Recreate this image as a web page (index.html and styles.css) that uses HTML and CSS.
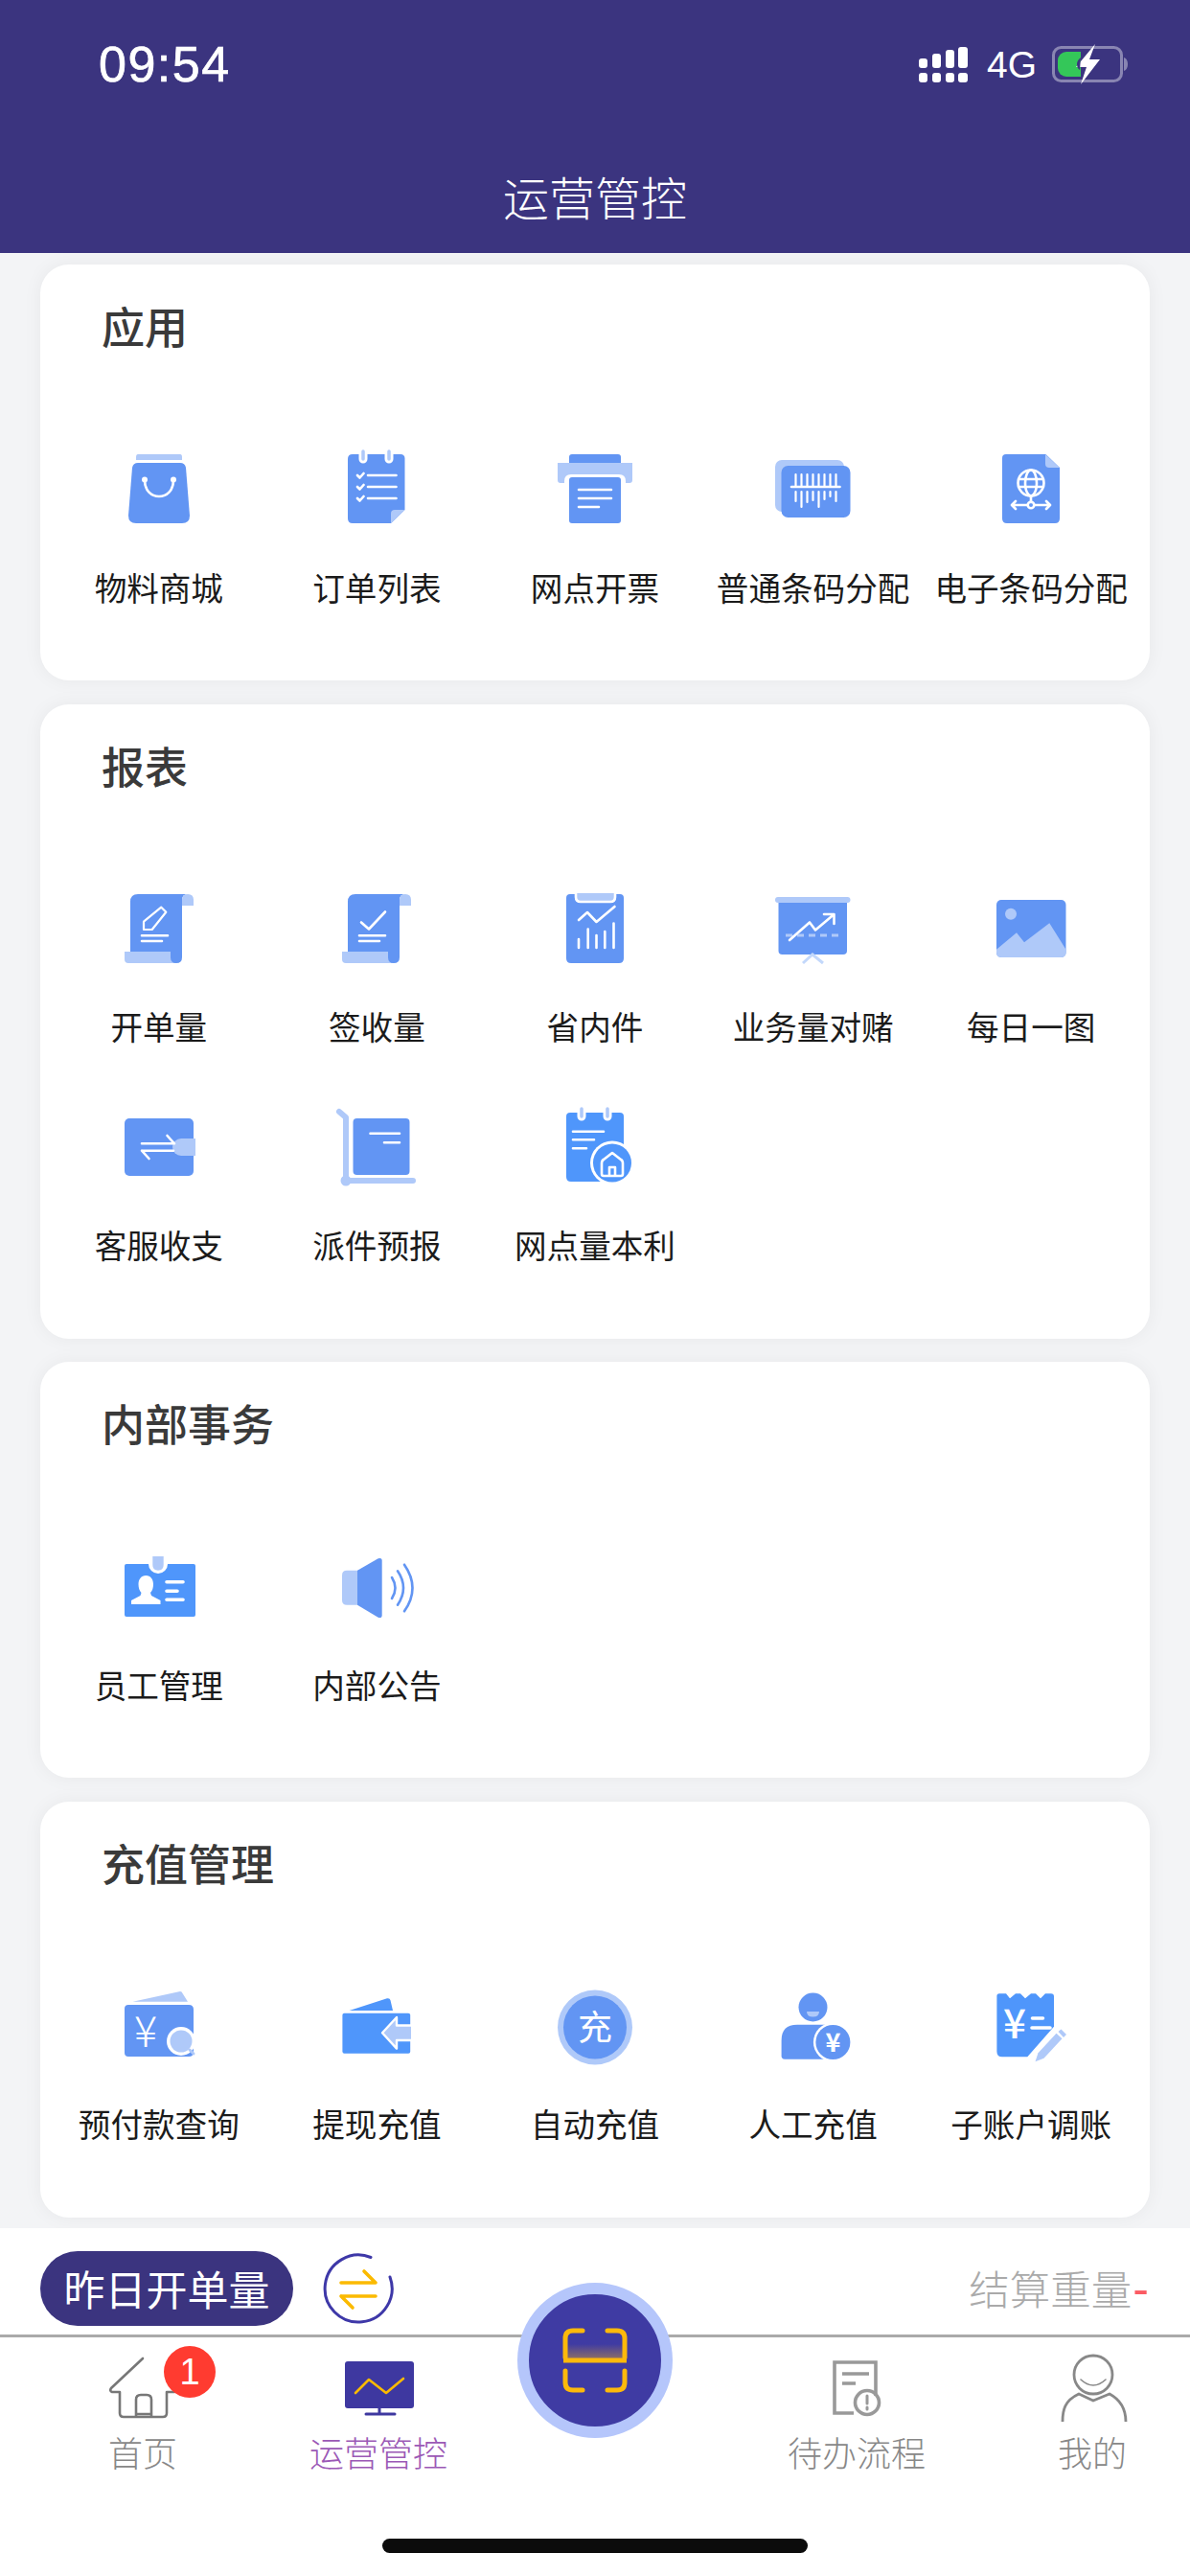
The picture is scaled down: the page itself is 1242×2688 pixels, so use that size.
FILE: index.html
```html
<!DOCTYPE html>
<html lang="zh-CN">
<head>
<meta charset="utf-8">
<title>运营管控</title>
<link rel="stylesheet" href="styles.css">
</head>
<body>
<div class="app">
  <header class="head">
    <div class="status">
      <span class="time">09:54</span>
      <div class="status-right">
        <svg class="signal" viewBox="0 0 51 37"><rect class="w" x="0" y="12" width="9" height="10" rx="3"/><rect class="w" x="0" y="27" width="9" height="10" rx="3"/><rect class="w" x="14" y="7" width="9" height="15" rx="3"/><rect class="w" x="14" y="27" width="9" height="10" rx="3"/><rect class="w" x="28" y="3" width="9" height="19" rx="3"/><rect class="w" x="28" y="27" width="9" height="10" rx="3"/><rect class="w" x="41" y="0" width="10" height="22" rx="3"/><rect class="w" x="41" y="27" width="10" height="10" rx="3"/></svg>
        <span class="net">4G</span>
        <svg class="battery" viewBox="0 0 80 42"><rect class="bat-frame" x="1.5" y="3.5" width="71" height="35" rx="8"/><path class="bat-nub" d="M75 14c3 1 4 4 4 7s-1 6-4 7z"/><path class="green" d="M6 17a9 9 0 0 1 9-9h15v26H15a9 9 0 0 1-9-9z"/><path class="w" d="M45 0 25 24h11l-6 18 20-26H39z"/><path class="notch" d="M30 14c-3 2-4 5-4 7s1 5 3 6z"/></svg>
      </div>
    </div>
    <h1 class="title">运营管控</h1>
  </header>

  <main class="main">
    <section class="card">
      <h2 class="card-title">应用</h2>
      <div class="grid">
        <div class="item">
          <svg class="ico" viewBox="0 0 100 100"><path class="l" d="M28 15h44q2 0 2 3v3H26v-3q0-3 2-3z"/><path class="d" d="M28 24h44q5 0 6 5l4 50q0 8-8 8H26q-8 0-8-8l4-50q1-5 6-5z"/><path class="s" d="M35 42c0 11 7 17 15 17s15-6 15-17"/><circle class="w" cx="35" cy="41.500" r="3"/><circle class="w" cx="65" cy="41.500" r="3"/></svg>
          <span class="label">物料商城</span>
        </div>
        <div class="item">
          <svg class="ico" viewBox="0 0 100 100"><path class="d" d="M25 15h50q4.500 0 4.500 4.500V73L65 87H25q-5 0-5-5V20q0-5 5-5z"/><path class="l" d="M65 87V77q0-4 4-4h10.500z"/><path class="ring" d="M36 13v7M63 13v7"/><path class="ring-in" d="M36 12v8M63 12v8"/><path class="s" d="M41 37h29.500M41 49h29.500M41 61h29.500"/><path class="s" d="M30 37l2.500 2.500 4-4.500M30 49l2.500 2.500 4-4.500M30 61l2.500 2.500 4-4.500"/></svg>
          <span class="label">订单列表</span>
        </div>
        <div class="item">
          <svg class="ico" viewBox="0 0 100 100"><path class="d" d="M26 15h48q3 0 3 3v10H23V18q0-3 3-3z"/><path class="l" d="M11 24h78v18q0 3-3 3h-4v-2q0-7-7-7H25q-7 0-7 7v2h-4q-3 0-3-3z"/><rect class="d" x="23" y="39" width="54" height="48" rx="3"/><path class="s" d="M33 52h34M33 61h34M33 70h21"/></svg>
          <span class="label">网点开票</span>
        </div>
        <div class="item">
          <svg class="ico" viewBox="0 0 100 100"><rect class="l" x="10" y="21" width="72" height="54" rx="7"/><rect class="d" x="16.500" y="27" width="72" height="54" rx="7"/><path class="bars" d="M31.500 36v12M37.500 36v12M43.500 36v12M49.500 36v12M55.500 36v12M61.500 36v12M67.500 36v12M73.500 36v12M31.500 54v10M37.500 54v16M43.500 54v11M49.500 54v9M55.500 54v16M61.500 54v8M67.500 54v5M73.500 54v10"/><path class="s" d="M27 49h50.500"/></svg>
          <span class="label">普通条码分配</span>
        </div>
        <div class="item">
          <svg class="ico" viewBox="0 0 100 100"><path class="d" d="M24 15h41.500L80 29v53q0 5-5 5H25q-5 0-5-5V19q0-4 4-4z"/><path class="l" d="M65 15l15 14H69q-4 0-4-4z"/><circle class="s" cx="50" cy="45" r="13.500"/><ellipse class="s" cx="50" cy="45" rx="6" ry="13.500"/><path class="s" d="M37 41h26M37 49h26M50 59v6M33 68h13.500M53.500 68H67M34 64l-4 4 4 4M66 64l4 4-4 4"/><circle class="s" cx="50" cy="68" r="3.300"/></svg>
          <span class="label">电子条码分配</span>
        </div>
      </div>
    </section>

    <section class="card">
      <h2 class="card-title">报表</h2>
      <div class="grid">
        <div class="item">
          <svg class="ico" viewBox="0 0 100 100"><path class="d" d="M28 15h52q-6 0-6 6v60q0 6-6 6H20V23q0-8 8-8z"/><path class="l" d="M74 27V21q0-6 6-6t6 6v6z"/><path class="l" d="M14 75h48v6q0 6 6 6H18q-4 0-4-4z"/><path class="s thin" d="M34 43.700 52.300 28.700l5 5L42.700 52H34z"/><path class="s" d="M32 58.300h27M32 64h21"/></svg>
          <span class="label">开单量</span>
        </div>
        <div class="item">
          <svg class="ico" viewBox="0 0 100 100"><path class="d" d="M28 15h52q-6 0-6 6v60q0 6-6 6H20V23q0-8 8-8z"/><path class="l" d="M74 27V21q0-6 6-6t6 6v6z"/><path class="l" d="M14 75h48v6q0 6 6 6H18q-4 0-4-4z"/><path class="s" d="M34 44.500l8 7 17-18M32 58.300h27M32 64h21"/></svg>
          <span class="label">签收量</span>
        </div>
        <div class="item">
          <svg class="ico" viewBox="0 0 100 100"><path class="d" d="M24 15h52q4 0 4 4v63q0 5-5 5H25q-5 0-5-5V19q0-4 4-4z"/><path class="clip" d="M30 14v4q0 5 5 5h31q5 0 5-5v-4"/><path class="s" d="M33 42l9-8 9.500 10 19-16M33 71V62M42.700 71V51.500M51.500 71V58M60.300 71V54M69.500 71V45.500"/></svg>
          <span class="label">省内件</span>
        </div>
        <div class="item">
          <svg class="ico" viewBox="0 0 100 100"><rect class="l" x="10" y="18" width="78.500" height="6" rx="3"/><path class="d" d="M13.500 24h71.500v50q0 4-4 4H17.500q-4 0-4-4z"/><path class="tick" d="M39 87l10-9 11 9"/><path class="dash" d="M21 58h55"/><path class="s" d="M25 63l21-18.500 6 8 19-16M61 36h10.500v10"/></svg>
          <span class="label">业务量对赌</span>
        </div>
        <div class="item">
          <svg class="ico" viewBox="0 0 100 100"><rect class="d" x="14" y="21" width="72.500" height="60" rx="5"/><circle class="l" cx="29" cy="35.700" r="6"/><path class="l" d="M14 72.700l21-17.500 8 10 26.300-20 17.200 27.500V76q0 5-5 5H19q-5 0-5-5z"/></svg>
          <span class="label">每日一图</span>
        </div>
        <div class="item">
          <svg class="ico" viewBox="0 0 100 100"><rect class="d" x="14" y="21" width="72" height="60" rx="5"/><path class="l" d="M73 42h15v18H73a9 9 0 0 1 0-18z"/><path class="s" d="M32 47.300h34l-7.500-8.300M32 54.700h33M32 54.700l7.500 8.300"/></svg>
          <span class="label">客服收支</span>
        </div>
        <div class="item">
          <svg class="ico" viewBox="0 0 100 100"><path class="frame" d="M11 14l7 6v66h70"/><circle class="l" cx="18" cy="86" r="5.500"/><rect class="d" x="25.500" y="21" width="59" height="59" rx="4"/><path class="s" d="M43.500 36.700H74M58 46.300H74"/></svg>
          <span class="label">派件预报</span>
        </div>
        <div class="item">
          <svg class="ico" viewBox="0 0 100 100"><path class="b" d="M24 15h52q4 0 4 4v63q0 5-5 5H25q-5 0-5-5V19q0-4 4-4z"/><path class="ring" d="M36 12v7M63 12v7"/><path class="ring-in" d="M36 11v8M63 11v8"/><path class="s" d="M27 34.700h32M27 43.300h22M27 52.300h14"/><circle class="w" cx="68" cy="67.500" r="23"/><circle class="b" cx="68" cy="67.500" r="20"/><path class="s" d="M57 68v11q0 2 2 2h18q2 0 2-2V68q0-3-2-4l-9-7-9 7q-2 1-2 4zM65 81v-9h6v9"/></svg>
          <span class="label">网点量本利</span>
        </div>
      </div>
    </section>

    <section class="card">
      <h2 class="card-title">内部事务</h2>
      <div class="grid">
        <div class="item">
          <svg class="ico" viewBox="0 0 100 100"><path class="b" d="M16 28h70q2 0 2 2v51q0 2-2 2H16q-2 0-2-2V30q0-2 2-2z" /><circle class="w" cx="49" cy="28" r="10"/><path class="l" d="M43.300 20h11.400v9q0 5.700-5.700 5.700t-5.700-5.700z"/><path class="w" d="M36.300 40c5 0 7.700 4 7.700 9 0 4-1 7-3 9l1 3 9.500 5v4H21v-4l9.500-5 1-3c-2-2-3-5-3-9 0-5 2.800-9 7.800-9z"/><path class="s thick" d="M58 46.700h17M58 56.300h11M58 65.300h17"/></svg>
          <span class="label">员工管理</span>
        </div>
        <div class="item">
          <svg class="ico" viewBox="0 0 100 100"><path class="l" d="M19 34.700h11v36H19q-5 0-5-5V39.700q0-5 5-5z"/><path class="d" d="M30 34.700 51.700 22.300q4-1.500 4 2.400v56.600q0 3.900-4 2.400L30 70.700z"/><path class="arc" d="M66 42q7 11 0 22M72 35.300q12 17.700 0 35.400M79 28.700q17 24.300 0 48.600"/></svg>
          <span class="label">内部公告</span>
        </div>
      </div>
    </section>

    <section class="card">
      <h2 class="card-title">充值管理</h2>
      <div class="grid">
        <div class="item">
          <svg class="ico" viewBox="0 0 100 100"><path class="l" d="M22.500 25.700 72 15q2 0 2.500 2L80 25.700z"/><path class="d" d="M18 29h63q5 0 5 5v44q0 5-5 5H18q-4 0-4-4V33q0-4 4-4z"/><text class="yen" x="36" y="73">¥</text><circle class="w" cx="73" cy="67" r="15"/><circle class="l" cx="73" cy="67" r="11.500"/><path class="handle" d="M82 76l4 4"/></svg>
          <span class="label">预付款查询</span>
        </div>
        <div class="item">
          <svg class="ico" viewBox="0 0 100 100"><path class="b" d="M21.600 35 61 22.300q3-.5 3.500 2L67 35z"/><rect class="b" x="14.400" y="37.700" width="70.800" height="42" rx="2"/><path class="arrow" d="M86 50.500h-15V42L56 58.300l15 16.300v-8.600h15"/></svg>
          <span class="label">提现充值</span>
        </div>
        <div class="item">
          <svg class="ico" viewBox="0 0 100 100"><circle class="l" cx="50" cy="52.500" r="39"/><circle class="d" cx="50" cy="52.500" r="33"/><text class="chong" x="50" y="66">充</text></svg>
          <span class="label">自动充值</span>
        </div>
        <div class="item">
          <svg class="ico" viewBox="0 0 100 100"><circle class="d" cx="49.500" cy="31.500" r="15"/><path class="l" d="M43 36h13q0 5.500-6.500 5.500T43 36z"/><path class="d" d="M33 49.700h32V85.700H20q-3.400 0-3.400-3.400V66q0-16.300 16.400-16.300z"/><circle class="w" cx="70.400" cy="68" r="20.500"/><circle class="d" cx="70.400" cy="68" r="18"/><text class="yen small" x="70.400" y="78">¥</text></svg>
          <span class="label">人工充值</span>
        </div>
        <div class="item">
          <svg class="ico" viewBox="0 0 100 100"><path class="b" d="M17 17.300h7l4 5 6-5h5l5 5 6-5h5l5 5 5-5h6q3 0 3 3v31.400L46.300 83.300H20q-5.600 0-5.600-5.600V20q0-2.700 2.600-2.700z"/><text class="yen mid" x="33" y="64">¥</text><path class="s thick" d="M51.500 43h11M51 53h19"/><path class="l" d="M54.500 88.300l3-9 19-20.500 6 5.500-19 20.500z"/><path class="l" d="M78.500 57l3-2.500 5.500 5.500-3 3z"/></svg>
          <span class="label">子账户调账</span>
        </div>
      </div>
    </section>
  </main>

  <div class="bar">
    <span class="pill">昨日开单量</span>
    <svg class="swap" viewBox="0 0 76 76"><path class="swap-ring" d="M51 5.500A35 35 0 1 0 71 26"/><path class="swap-arrow" d="M20 32h36l-12-12M20 46h36M20 46l12 12"/></svg>
    <span class="settle">结算重量<span class="dash-red">-</span></span>
  </div>

  <nav class="nav">
    <div class="tab">
      <svg class="tab-ico" viewBox="0 0 120 82"><path class="home" d="M60 16 27 47q-2 3 1 4h8v22q0 4 4 4h41q4 0 4-4V51h8M53 77V59q0-5 5-5h6q5 0 5 5v18M53 74h16"/></svg>
      <span class="tab-label">首页</span>
      <span class="badge">1</span>
    </div>
    <div class="tab">
      <svg class="tab-ico" viewBox="0 0 120 82"><rect class="mon" x="25" y="19" width="72" height="49" rx="3"/><path class="mon-base" d="M61 68v6M47 74h30"/><path class="mon-line" d="M36 52l14-14 18 14 18-15"/></svg>
      <span class="tab-label active">运营管控</span>
    </div>
    <div class="tab-gap"></div>
    <div class="tab">
      <svg class="tab-ico" viewBox="0 0 120 82"><path class="task" d="M57 73H37V20h43v35"/><path class="task-line" d="M45 32h28M45 42h14"/><circle class="task-c" cx="71" cy="62" r="12.500"/><path class="task-bang" d="M71 55v8M71 67v2"/></svg>
      <span class="tab-label">待办流程</span>
    </div>
    <div class="tab">
      <svg class="tab-ico" viewBox="0 0 120 82"><ellipse class="me" cx="61" cy="33" rx="20" ry="20"/><path class="me thin-me" d="M48 38q13 12 26 0"/><path class="me" d="M29 82c0-12 2-22 17-29l15 7 17-7c13 7 17 17 17 29"/></svg>
      <span class="tab-label">我的</span>
    </div>
  </nav>

  <div class="scan">
    <svg class="scan-ico" viewBox="0 0 66 66"><defs><linearGradient id="beam" x1="0" y1="0" x2="0" y2="1"><stop offset="0" stop-color="#fdb90b" stop-opacity="0"/><stop offset="1" stop-color="#fdb90b" stop-opacity=".4"/></linearGradient></defs><rect x="2" y="16" width="62" height="15" fill="url(#beam)"/><path class="scan-line" d="M20 2H10q-8 0-8 8v20M46 2h10q8 0 8 8v20M20 64H10q-8 0-8-8V44M46 64h10q8 0 8-8V44"/><path class="scan-mid" d="M0 33h66"/></svg>
  </div>
  <div class="home-bar"></div>
</div>
</body>
</html>
```

FILE: styles.css
```css
* { box-sizing: border-box; }
html, body { margin: 0; padding: 0; }
body { font-family: "Noto Sans CJK SC", "Noto Sans", sans-serif; background: #fff; }

.app { position: relative; width: 1242px; height: 2688px; overflow: hidden; display: flex; flex-direction: column; background: #fff; }

.head { height: 264px; flex: none; background: #3b347f; color: #fff; }
.status { height: 134px; padding: 49px 64px 0 103px; display: flex; justify-content: space-between; align-items: flex-start; }
.time { font-family: "Liberation Sans", sans-serif; font-size: 52px; line-height: 37px; font-weight: 400; letter-spacing: 1.5px; -webkit-text-stroke: 0.7px #fff; }
.status-right { display: flex; align-items: flex-start; height: 37px; }
.signal { width: 51px; height: 37px; }
.net { font-family: "Liberation Sans", sans-serif; font-size: 39px; line-height: 37px; margin-left: 20px; width: 68px; }
.battery { width: 80px; height: 42px; margin-top: -3px; }
.title { margin: 0; height: 130px; padding-top: 13px; font-size: 48px; line-height: 114px; font-weight: 300; text-align: center; }

.main { flex: 1; min-height: 0; background: #f3f4f6; padding: 12px 42px 0; display: flex; flex-direction: column; gap: 24.5px; }
.card { background: #fff; border-radius: 30px; padding: 34px 10px 23px; box-shadow: 0 0 20px rgba(0, 0, 0, 0.05); }
.card-title { margin: 0; padding-left: 54px; font-size: 45px; line-height: 60px; font-weight: 500; color: #3a3a3a; }
.grid { display: grid; grid-template-columns: repeat(5, 1fr); margin-top: 89px; }
.item { display: flex; flex-direction: column; align-items: center; height: 228px; }
.ico { width: 100px; height: 100px; flex: none; }
.label { margin-top: 29.5px; font-size: 33.6px; line-height: 48px; color: #1b1b1b; white-space: nowrap; font-weight: 400; }

/* icon paint */
.d { fill: #6295f3; }
.l { fill: #afc9f9; }
.b { fill: #4f96fb; }
.w { fill: #fff; }
.s { fill: none; stroke: #fff; stroke-width: 2.6; stroke-linecap: round; stroke-linejoin: round; }
.s.thin { stroke-width: 2.2; }
.s.thick { stroke-width: 3.6; }
.ring { fill: none; stroke: #fff; stroke-width: 9; stroke-linecap: round; }
.ring-in { fill: none; stroke: #afc9f9; stroke-width: 3.5; stroke-linecap: round; }
.bars { fill: none; stroke: #fff; stroke-width: 2.2; stroke-linecap: round; }
.clip { fill: #afc9f9; stroke: #fff; stroke-width: 2.6; }
.tick { fill: none; stroke: #c3d8fb; stroke-width: 3; }
.dash { fill: none; stroke: #afc9f9; stroke-width: 3; stroke-dasharray: 7 5; }
.frame { fill: none; stroke: #afc9f9; stroke-width: 6; stroke-linecap: round; stroke-linejoin: round; }
.arc { fill: none; stroke: #6295f3; stroke-width: 2.6; stroke-linecap: round; }
.handle { fill: none; stroke: #afc9f9; stroke-width: 3; stroke-linecap: round; }
.arrow { fill: #afc9f9; stroke: #fff; stroke-width: 2.4; stroke-linejoin: round; }
.yen { font-family: "Noto Sans CJK SC", sans-serif; font-size: 45px; font-weight: 300; fill: #fff; text-anchor: middle; }
.yen.small { font-size: 27px; font-weight: 700; }
.yen.mid { font-size: 42px; font-weight: 500; }
.chong { font-family: "Noto Sans CJK SC", sans-serif; font-size: 36px; fill: #fff; text-anchor: middle; }

.bat-frame { fill: none; stroke: rgba(255, 255, 255, 0.4); stroke-width: 3; }
.bat-nub { fill: rgba(255, 255, 255, 0.4); }
.green { fill: #34c759; }
.notch { fill: #3b347f; }

.bar { height: 111px; flex: none; background: #fff; padding: 24px 43px 0 42px; display: flex; align-items: flex-start; }
.pill { width: 264px; height: 78px; border-radius: 39px; background: #3b347f; color: #fff; font-size: 43px; line-height: 76px; text-align: center; font-weight: 400; }
.swap { width: 76px; height: 76px; margin: 1px 0 0 30px; }
.swap-ring { fill: none; stroke: #3e38a8; stroke-width: 3; stroke-linecap: round; }
.swap-arrow { fill: none; stroke: #fbba00; stroke-width: 3.6; stroke-linecap: round; stroke-linejoin: round; }
.settle { margin-left: auto; font-size: 42.5px; line-height: 76px; color: #aaa; font-weight: 300; }
.dash-red { margin-left: 1px; color: #fb5b63; font-family: "Liberation Sans", sans-serif; font-size: 50px; }

.nav { height: 252px; flex: none; border-top: 3px solid #aaa; display: grid; grid-template-columns: 298px 194px 258px 288px 204px; background: #fff; }
.tab { position: relative; display: flex; flex-direction: column; align-items: center; padding-top: 6px; }
.tab-ico { width: 120px; height: 82px; flex: none; }
.tab-label { margin-top: 6px; font-size: 36px; line-height: 50px; color: #888; font-weight: 300; white-space: nowrap; }
.tab-label.active { color: #9b59b6; }
.badge { position: absolute; left: 171px; top: 9px; width: 54px; height: 54px; border-radius: 50%; background: #ff3b30; color: #fff; font-family: "Liberation Sans", sans-serif; font-size: 38px; line-height: 54px; text-align: center; }

.home { fill: none; stroke: #777; stroke-width: 2.6; stroke-linecap: round; stroke-linejoin: round; }
.mon { fill: #3e38a0; }
.mon-base { fill: none; stroke: #3e38a0; stroke-width: 3; stroke-linecap: round; }
.mon-line { fill: none; stroke: #fbba00; stroke-width: 2.6; stroke-linecap: round; stroke-linejoin: round; }
.task { fill: none; stroke: #999; stroke-width: 3.6; }
.task-line { fill: none; stroke: #999; stroke-width: 3.4; }
.task-c { fill: none; stroke: #999; stroke-width: 3.6; }
.task-bang { fill: none; stroke: #999; stroke-width: 3; stroke-linecap: round; }
.me { fill: none; stroke: #888; stroke-width: 2.8; stroke-linecap: round; stroke-linejoin: round; }
.me.thin-me { stroke-width: 1.6; }

.scan { position: absolute; left: 540px; top: 2382px; width: 162px; height: 162px; border-radius: 50%; background: #3f3ba3; border: 12px solid #b5c6fb; display: flex; align-items: center; justify-content: center; }
.scan-ico { width: 66px; height: 66px; overflow: visible; }
.scan-line { fill: none; stroke: #fdb90b; stroke-width: 5; stroke-linecap: round; }
.scan-mid { fill: none; stroke: #fdb90b; stroke-width: 5; }

.home-bar { position: absolute; left: 399px; top: 2649px; width: 444px; height: 15px; border-radius: 8px; background: #0c0c0c; }
```
